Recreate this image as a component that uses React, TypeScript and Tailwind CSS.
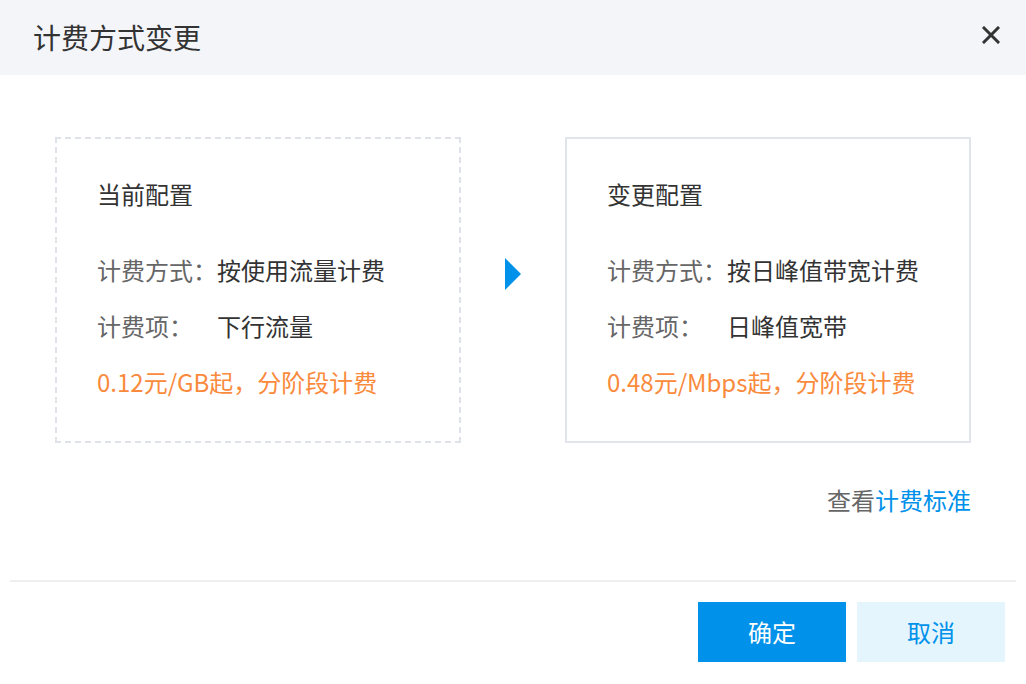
import React from 'react';

const font = { fontFamily: '"Noto Sans CJK SC", "Noto Sans", sans-serif' };

type Row = { label: string; value: string };

const ConfigCard = ({
  title,
  rows,
  price,
  dashed,
}: {
  title: string;
  rows: Row[];
  price: string;
  dashed?: boolean;
}) => (
  <div
    className={`w-[406px] h-[306px] border-2 px-[40px] pt-[39px] ${
      dashed ? 'border-dashed border-[#dfe2e8]' : 'border-solid border-[#e1e4ea]'
    }`}
  >
    <div className="text-[24px] leading-[32px] text-[#333]">{title}</div>
    <div className="mt-[44px] flex flex-col gap-[24px]">
      {rows.map((r) => (
        <div key={r.label} className="flex text-[24px] leading-[32px]">
          <span className="w-[120px] shrink-0 text-[#666]">{r.label}</span>
          <span className="text-[#333]">{r.value}</span>
        </div>
      ))}
      <div className="text-[24px] leading-[32px] text-[#fa8a3c]">{price}</div>
    </div>
  </div>
);

export default function App() {
  return (
    <div className="w-[1026px] h-[684px] bg-white overflow-hidden" style={font}>
      {/* Header */}
      <div className="h-[75px] bg-[#f4f5f9] flex items-center justify-between pl-[33px] pr-[26px]">
        <span className="text-[28px] text-[#333] leading-none -mt-[2px]">计费方式变更</span>
        <button aria-label="关闭" className="w-[18px] h-[18px] flex items-center justify-center -mt-[6px]">
          <svg width="18" height="18" viewBox="0 0 18 18">
            <path d="M2 2 L16 16 M16 2 L2 16" stroke="#333" strokeWidth="3" strokeLinecap="square" />
          </svg>
        </button>
      </div>

      {/* Body */}
      <div className="px-[55px] pt-[62px]">
        <div className="flex items-start justify-between">
          <ConfigCard
            dashed
            title="当前配置"
            rows={[
              { label: '计费方式：', value: '按使用流量计费' },
              { label: '计费项：', value: '下行流量' },
            ]}
            price="0.12元/GB起，分阶段计费"
          />
          <svg className="mt-[121px]" width="16" height="32" viewBox="0 0 16 32">
            <path d="M0 0 L16 16 L0 32 Z" fill="#0091ea" />
          </svg>
          <ConfigCard
            title="变更配置"
            rows={[
              { label: '计费方式：', value: '按日峰值带宽计费' },
              { label: '计费项：', value: '日峰值宽带' },
            ]}
            price="0.48元/Mbps起，分阶段计费"
          />
        </div>
        <div className="mt-[41px] flex justify-end text-[24px] leading-[32px]">
          <span className="text-[#666]">查看</span>
          <a href="#" className="text-[#0091ea]">计费标准</a>
        </div>
      </div>

      {/* Footer */}
      <div className="mx-[10px] mt-[64px] h-[2px] bg-[#efefef]" />
      <div className="flex justify-end gap-[11px] pr-[21px] pt-[20px]">
        <button className="w-[148px] h-[60px] bg-[#0091ea] text-white text-[24px]">确定</button>
        <button className="w-[148px] h-[60px] bg-[#e5f5fd] text-[#0091ea] text-[24px]">取消</button>
      </div>
    </div>
  );
}
